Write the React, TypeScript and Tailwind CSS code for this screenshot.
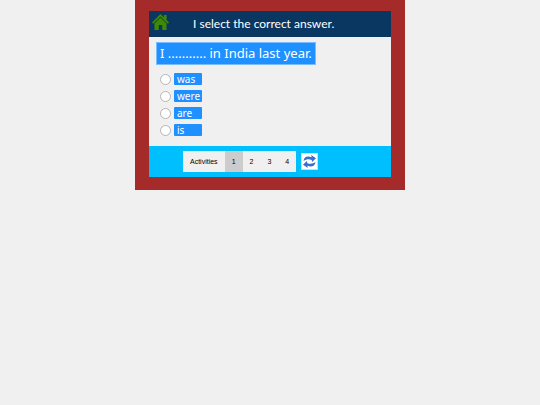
import React, { useState } from 'react'

interface OptionProps {
  label: string;
  checked: boolean;
  onSelect: () => void;
}

interface ActivityNavProps {
  current: number;
  onChange: (activity: number) => void;
}

const options = ['was', 'were', 'are', 'is'];
const activities = [1, 2, 3, 4];

const HomeIcon: React.FC = () => {
  return (
    <svg viewBox="0 0 34 32" className="h-4 w-[17px]" aria-hidden="true">
      <path
        d="M17 0 L24 7 V2 H29 V12 L34 17 L31.5 19.5 L17 5 L2.5 19.5 L0 17 Z"
        fill="#3f8a05"
      />
      <path d="M17 7 L29 19 V32 H20.5 V22 H13.5 V32 H5 V19 Z" fill="#3f8a05" />
    </svg>
  );
};

const RefreshIcon: React.FC = () => {
  return (
    <svg viewBox="0 0 24 24" className="h-[13px] w-[13px]" aria-hidden="true">
      <path d="M1 11 C2 3 8 1 16 4 L15 0 L24 6 L17 13 L16 9 C10 7 6 8 1 11 Z" fill="#3b6fc9" />
      <path d="M23 13 C22 21 16 23 8 20 L9 24 L0 18 L7 11 L8 15 C14 17 18 16 23 13 Z" fill="#3b6fc9" />
    </svg>
  );
};

const Header: React.FC = () => {
  return (
    <header className="flex h-[26px] items-center bg-[#0a3761] px-[3px]">
      <a href="#home" aria-label="Home" className="-mt-1">
        <HomeIcon />
      </a>
      <h1 className="ml-6 whitespace-nowrap font-['Comic_Sans_MS','Lato',sans-serif] text-[12px] leading-5 text-white">
        I select the correct answer.
      </h1>
    </header>
  );
};

const Option: React.FC<OptionProps> = ({ label, checked, onSelect }) => {
  return (
    <label className="flex w-fit items-center gap-[3px]">
      <input
        type="radio"
        name="answer"
        checked={checked}
        onChange={onSelect}
        className="h-[11px] w-[11px] appearance-none rounded-full border border-[#b5b5b5] bg-white checked:border-[3px] checked:border-[#1e90ff]"
      />
      <span className="w-7 rounded-[1px] bg-[#1e90ff] pl-[3px] font-['Comic_Sans_MS','Noto_Sans',sans-serif] text-[10px] leading-3 text-white">
        {label}
      </span>
    </label>
  );
};

const ActivityNav: React.FC<ActivityNavProps> = ({ current, onChange }) => {
  return (
    <nav className="flex h-[21px] items-stretch bg-[#f0f0f0] text-[7px] leading-4 text-black">
      <span className="flex items-center px-[7px]">Activities</span>
      {activities.map((activity) => (
        <button
          key={activity}
          type="button"
          onClick={() => onChange(activity)}
          className={activity === current ? 'bg-[#cccccc] px-[7px]' : 'px-[7px]'}
        >
          {activity}
        </button>
      ))}
    </nav>
  );
};

export default function App() {
  const [answer, setAnswer] = useState('');
  const [activity, setActivity] = useState(1);

  return (
    <div className="min-h-screen bg-[#f0f0f0] font-['Liberation_Sans',sans-serif]">
      <div className="mx-auto w-1/2 bg-[#a52a2a] px-[14px] pt-[11px] pb-[13px]">
        <Header />
        <main className="bg-[#f0f0f0] px-[7px] pt-[5px] pb-[10px]">
          <p className="w-fit whitespace-nowrap border border-[#79bcff] bg-[#1e90ff] px-[3px] font-['Comic_Sans_MS','Noto_Sans',sans-serif] text-[13px] leading-[21px] text-white">
            I ........... in India last year.
          </p>
          <div className="mt-2 flex flex-col gap-[5px] pl-1">
            {options.map((option) => (
              <Option
                key={option}
                label={option}
                checked={answer === option}
                onSelect={() => setAnswer(option)}
              />
            ))}
          </div>
        </main>
        <footer className="flex items-center gap-[5px] bg-[#00bfff] py-[5px] pl-[34px]">
          <ActivityNav current={activity} onChange={setActivity} />
          <button
            type="button"
            aria-label="Restart"
            onClick={() => setAnswer('')}
            className="flex h-[17px] w-[17px] items-center justify-center border border-[#b5e6f7] bg-white"
          >
            <RefreshIcon />
          </button>
        </footer>
      </div>
    </div>
  );
}
